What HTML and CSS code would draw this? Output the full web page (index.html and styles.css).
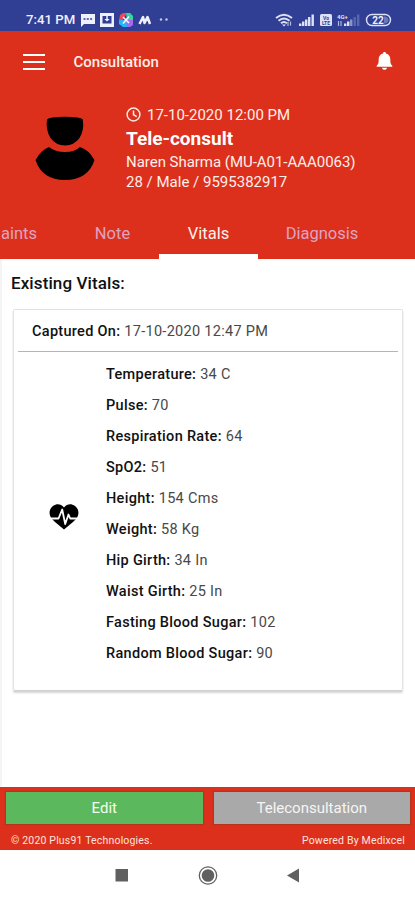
FILE: index.html
```
<!DOCTYPE html>
<html lang="en">
<head>
<meta charset="UTF-8">
<meta name="viewport" content="width=device-width,initial-scale=1.0">
<title>Consultation</title>
<link rel="stylesheet" href="styles.css">
</head>
<body>
<div class="statusbar">
<span class="time">7:41 PM</span>
<svg class="notif" width="90" height="16" viewBox="0 0 90 16">
<path fill="#eef0fb" d="M1 2h14v10H4l-3 3z"/>
<path stroke="#303f94" stroke-width="1.6" stroke-dasharray="2 1.3" d="M3.5 7h9"/>
<path fill="#eef0fb" d="M20 1h14v14H20z"/>
<path fill="#303f94" d="M22.500 4h9v7.500h-9z"/>
<path fill="#eef0fb" d="M26.300 4h1.500v3h2L27 9.500 24.300 7h2z"/>
<path fill="#f04860" d="M40 3l3-2 4 0-4 7-4 0z"/>
<path fill="#35d6a0" d="M46 1h4l3 3v4l-6 0z"/>
<path fill="#a568f0" d="M53 8v5l-3 2h-4l0-7z"/>
<path fill="#25b8f5" d="M39 8h7l1 7h-4l-4-3z"/>
<path fill="none" stroke="#fff" stroke-width="1.500" d="M43 5l6 6M49 4.500l-6 7"/>
<path fill="none" stroke="#eef0fb" stroke-width="2.500" stroke-linejoin="round" d="M59.500 12l3.500-7 1.500 6 3-6 2.500 7"/>
<circle cx="81" cy="7.500" r="1.200" fill="#c4c9e8"/>
<circle cx="86.500" cy="7.500" r="1.200" fill="#c4c9e8"/>
</svg>
<svg class="signals" width="118" height="16" viewBox="0 0 118 16">
<g fill="none" stroke="#dde1f5" stroke-width="2">
<path d="M1 6q8-6.500 16 0M3.500 8.700q5.500-4.500 11 0M6 11.300q3-2.500 6 0"/>
</g>
<path fill="#dde1f5" d="M7 12.500h4L9 14.500z"/>
<path stroke="#b4bce2" stroke-width="1.200" d="M13 10v4M15.500 9.500v4"/>
<path fill="#dde1f5" d="M24 11.500h2.400V14H24zM27 9.500h2.400V14H27zM30 7.500h2.400V14H30zM33 5h2.400v9H33zM36.500 2.500h2.400V14h-2.400z"/>
<rect x="45" y="2" width="12" height="12" rx="1.500" fill="#dde1f5"/>
<text class="volte" x="51" y="7.500">Vo</text>
<text class="volte" x="51" y="12.700">LTE</text>
<text class="fourg" x="62" y="7">4G+</text>
<path stroke="#aeb7df" stroke-width="1.200" d="M63.500 9v5M66 9v5"/>
<path fill="#dde1f5" d="M69 11.500h2.400V14H69zM72 9.500h2.400V14H72z"/>
<path fill="#8994cb" d="M75 7.500h2.400V14H75z"/>
<path fill="#5866ae" d="M78.500 5h2.400v9h-2.400zM82 2.500h2.400V14H82z"/>
<rect x="91.500" y="2.500" width="24" height="11" rx="5.500" fill="none" stroke="#dde1f5" stroke-width="1.400"/>
<path fill="#6b78ba" d="M109 4.500h1q3.500 1 3.500 3.500t-3.500 3.500h-1z"/>
<text class="batt" x="103" y="11.500">22</text>
</svg>
</div>

<div class="top">
<div class="appbar">
<svg class="menu" width="24" height="18" viewBox="0 0 24 18"><path stroke="#fff" stroke-width="2" d="M1 2h22M1 9h22M1 16h22"/></svg>
<h1>Consultation</h1>
<svg class="bell" width="17" height="19" viewBox="0 0 17 19"><path fill="#fff" d="M8.500 0c1 0 1.500.7 1.500 1.400 3 .8 4.300 3 4.300 5.600 0 4 .3 5.200 2 6.800v1H.7v-1C2.400 12.200 2.700 11 2.700 7c0-2.600 1.300-4.800 4.300-5.600C7 .7 7.500 0 8.500 0zM6 15.700h5c-.3 1.400-1.200 2-2.500 2S6.300 17.100 6 15.700z"/></svg>
</div>

<div class="patient">
<svg class="avatar" width="60" height="66" viewBox="0 0 60 66">
<path d="M12 3.500Q14 1 30 .8 46 1 47.800 3.500 49.500 14 44.500 22 39 29.500 30 29.500T15.500 22Q10.500 14 12 3.500z"/>
<path d="M14 31Q20 36 30 36T45 31Q54 34 59.500 44 53 64 30 64T.5 44Q6 34 14 31z"/>
</svg>
<div class="info">
<p class="when"><svg width="15" height="15" viewBox="0 0 15 15"><g fill="none" stroke="#ffe9e2" stroke-width="1.500"><circle cx="7.500" cy="7.500" r="6.400"/><path d="M7.500 3.500v4.200l3.200 1.900"/></g></svg><span>17-10-2020 12:00 PM</span></p>
<h2>Tele-consult</h2>
<p class="name">Naren Sharma (MU-A01-AAA0063)</p>
<p class="details">28 / Male / 9595382917</p>
</div>
</div>

<div class="tabs">
<span class="tab first">aints</span>
<span class="tab note">Note</span>
<span class="tab active">Vitals</span>
<span class="tab diag">Diagnosis</span>
</div>
</div>

<div class="content">
<h3>Existing Vitals:</h3>
<div class="card">
<p class="captured"><b>Captured On:</b> 17-10-2020 12:47 PM</p>
<div class="vitals">
<div class="heart">
<svg width="30" height="26" viewBox="0 0 30 26">
<path d="M15 3.500C17.500.2 21 0 23.500.7 28 2 30.500 7 29 11.500 28 14.500 26 16 24 18L15 25.500 6 18C4 16 2 14.500 1 11.500-.5 7 2 2 6.500.7 9 0 12.500.2 15 3.500z"/>
<path fill="none" stroke="#fff" stroke-width="1.800" stroke-linejoin="round" d="M2 14.500h7.500l3.700-9 3 14.500 3.300-9.500 1.700 4H28"/>
</svg>
</div>
<div class="list">
<p><b>Temperature:</b> 34 C</p>
<p><b>Pulse:</b> 70</p>
<p><b>Respiration Rate:</b> 64</p>
<p><b>SpO2:</b> 51</p>
<p><b>Height:</b> 154 Cms</p>
<p><b>Weight:</b> 58 Kg</p>
<p><b>Hip Girth:</b> 34 In</p>
<p><b>Waist Girth:</b> 25 In</p>
<p><b>Fasting Blood Sugar:</b> 102</p>
<p><b>Random Blood Sugar:</b> 90</p>
</div>
</div>
</div>
</div>

<div class="bottom">
<div class="buttons">
<button class="edit">Edit</button>
<button class="tele">Teleconsultation</button>
</div>
<div class="copy">
<span>© 2020 Plus91 Technologies.</span>
<span>Powered By Medixcel</span>
</div>
</div>

<div class="navbar">
<svg width="415" height="49" viewBox="0 0 415 49">
<path fill="#606060" d="M115.500 19h12.500v12.500h-12.500zM299 18.500v14L287 25.500z"/>
<circle cx="208" cy="25.500" r="6.300" fill="#606060"/>
<circle cx="208" cy="25.500" r="8.700" fill="none" stroke="#606060" stroke-width="1.300"/>
</svg>
</div>
</body>
</html>
```
FILE: styles.css
```
*
{
box-sizing:border-box;
}
body
{
margin:0;
width:415px;
height:900px;
overflow:hidden;
display:flex;
flex-direction:column;
font-family:Roboto,sans-serif;
background-color:#fff;
}
h1,h2,h3,p
{
margin:0;
}
svg
{
display:block;
flex:none;
}
.statusbar
{
height:31px;
background-color:#303f94;
display:flex;
align-items:center;
padding:8px 22px 0 26px;
}
.time
{
width:54px;
color:#eef0fb;
font-size:13.200px;
font-weight:500;
white-space:nowrap;
}
.signals
{
margin-left:auto;
}
.volte
{
font-size:5px;
font-weight:700;
fill:#303f94;
text-anchor:middle;
}
.fourg
{
font-size:6px;
font-weight:700;
fill:#dde1f5;
}
.batt
{
font-size:10px;
font-weight:700;
fill:#eef0fb;
text-anchor:middle;
}
.top
{
height:228px;
background-color:#dc301c;
color:#ffeee9;
display:flex;
flex-direction:column;
}
.appbar
{
height:61px;
display:flex;
align-items:center;
padding:0 22px 0 22px;
}
.appbar h1
{
margin-left:27.500px;
font-size:15px;
font-weight:500;
}
.bell
{
margin-left:auto;
}
.patient
{
height:116px;
display:flex;
padding:12px 0 0 35px;
}
.avatar
{
margin-top:12px;
}
.info
{
margin-left:31px;
font-size:15px;
white-space:nowrap;
}
.when
{
height:21px;
display:flex;
align-items:center;
gap:6px;
}
.info h2
{
height:27px;
line-height:27px;
font-size:19px;
font-weight:700;
color:#fff;
}
.name,.details
{
line-height:20px;
}
.name
{
letter-spacing:-.03px;
}
.tabs
{
height:51px;
display:flex;
font-size:16.500px;
line-height:51px;
color:#dfa3c0;
}
.tab
{
text-align:center;
}
.first
{
width:66px;
padding-left:1px;
text-align:left;
}
.note
{
width:93px;
}
.active
{
width:99px;
color:#fff0ea;
border-bottom:5px solid #fff;
}
.diag
{
width:128px;
}
.content
{
flex:1;
border-left:2px solid #f5f5f5;
padding:14px 12px 0 9px;
color:#111;
}
.content h3
{
font-size:17px;
line-height:21px;
font-weight:500;
letter-spacing:.1px;
}
.card
{
height:382px;
margin:15px 0 0 2px;
border:1px solid #e2e2e2;
border-bottom-color:#cfcfcf;
border-radius:2px;
box-shadow:0 2px 2px #d5d5d5;
padding:0 4px;
font-size:14.500px;
letter-spacing:.3px;
color:#484848;
}
.card b
{
font-weight:500;
color:#111;
}
.captured
{
height:42px;
line-height:43px;
padding-left:14px;
border-bottom:1px solid #b5b5b5;
}
.vitals
{
display:flex;
align-items:center;
padding-top:7px;
}
.heart
{
width:88px;
padding:6px 0 0 31px;
}
.list p
{
height:31px;
line-height:31px;
}
.bottom
{
height:63px;
background-color:#dc301c;
padding:5px 5px 0 6px;
}
.buttons
{
display:flex;
gap:11px;
}
.buttons button
{
flex:1;
height:32px;
border:0;
padding:0;
font-family:Roboto,sans-serif;
font-size:15px;
color:#f4fff2;
box-shadow:0 0 1px 1px rgba(120,60,30,.4);
}
.buttons .edit
{
background-color:#5cb85c;
}
.buttons .tele
{
background-color:#a9a9a9;
color:#f5f5f5;
}
.copy
{
display:flex;
justify-content:space-between;
padding:0 5px 0 5px;
font-size:10.500px;
letter-spacing:.18px;
line-height:33px;
color:#ffe3dc;
}
.navbar
{
height:50px;
}
```
